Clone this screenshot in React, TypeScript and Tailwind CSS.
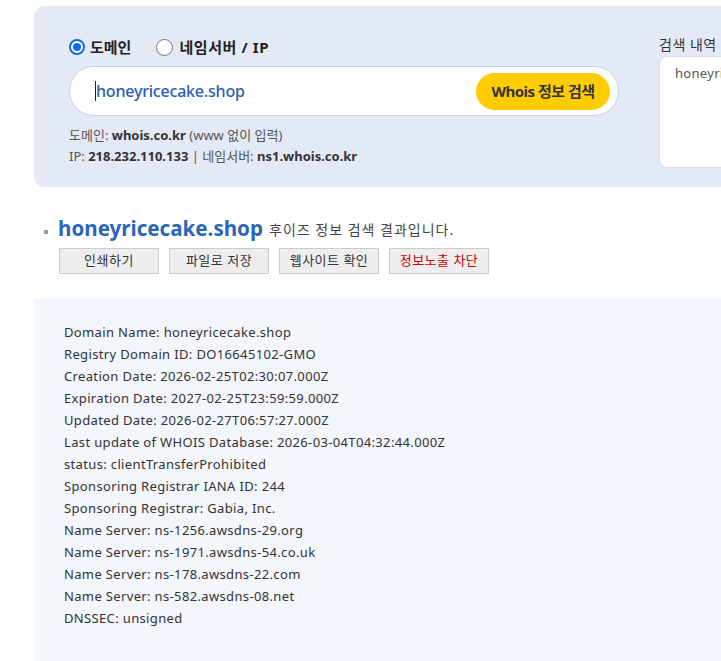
const lines = [
  'Domain Name: honeyricecake.shop',
  'Registry Domain ID: DO16645102-GMO',
  'Creation Date: 2026-02-25T02:30:07.000Z',
  'Expiration Date: 2027-02-25T23:59:59.000Z',
  'Updated Date: 2026-02-27T06:57:27.000Z',
  'Last update of WHOIS Database: 2026-03-04T04:32:44.000Z',
  'status: clientTransferProhibited',
  'Sponsoring Registrar IANA ID: 244',
  'Sponsoring Registrar: Gabia, Inc.',
  'Name Server: ns-1256.awsdns-29.org',
  'Name Server: ns-1971.awsdns-54.co.uk',
  'Name Server: ns-178.awsdns-22.com',
  'Name Server: ns-582.awsdns-08.net',
  'DNSSEC: unsigned',
];

const App = () => {
  return (
    <div
      className="w-[721px] h-[661px] overflow-hidden bg-white"
      style={{ fontFamily: '"Noto Sans", "Noto Sans CJK KR", sans-serif' }}
    >
      <div className="w-[1000px] pl-[34px] pt-[6px]">
        {/* search panel */}
        <div className="flex h-[181px] rounded-[10px] bg-[#e3eaf5] pl-[35px]">
          <div className="w-[550px] pt-[30px]">
            <div className="flex items-center h-[22px] text-[15px] font-bold text-[#222]">
              <span className="flex items-center">
                <span className="w-[16px] h-[16px] rounded-full border-2 border-[#0b6cf0] bg-white flex items-center justify-center">
                  <span className="w-[8px] h-[8px] rounded-full bg-[#0b6cf0]" />
                </span>
                <span className="ml-[5px]">도메인</span>
              </span>
              <span className="flex items-center ml-[25px]">
                <span className="w-[17px] h-[17px] rounded-full border border-[#767676] bg-white" />
                <span className="ml-[6px] tracking-[0.6px]">네임서버 / IP</span>
              </span>
            </div>
            <div className="mt-[8px] h-[50px] rounded-full border border-[#c3d3ef] bg-white flex items-center justify-between pl-[25px] pr-[8px]">
              <div className="flex items-center text-[16px] font-medium text-[#2a5cb8] tracking-[-0.2px]">
                <span className="w-[1px] h-[20px] bg-[#222]" />
                <span>honeyricecake.shop</span>
              </div>
              <button className="h-[37px] w-[134px] rounded-full bg-[#ffcc00] text-[15px] font-bold text-[#333] tracking-[-0.5px]">
                Whois 정보 검색
              </button>
            </div>
            <div className="mt-[9px] text-[13px] leading-[21px] text-[#555]">
              <div>
                도메인: <b className="text-[#333]">whois.co.kr</b> (www 없이 입력)
              </div>
              <div>
                IP: <b className="text-[#333]">218.232.110.133</b> | 네임서버: <b className="text-[#333]">ns1.whois.co.kr</b>
              </div>
            </div>
          </div>
          <div className="ml-[40px] pt-[29px]">
            <div className="text-[14px] leading-[20px] text-[#333] tracking-[0.5px]">검색 내역</div>
            <div className="mt-[1px] w-[200px] h-[112px] rounded-[8px] border border-[#d5deec] bg-white px-[15px] pt-[7px] text-[13px] text-[#555] tracking-[0.3px]">
              honeyricecake.shop
            </div>
          </div>
        </div>

        {/* result title */}
        <div className="mt-[27px] pl-[10px] flex items-end">
          <span className="w-[4px] h-[4px] bg-[#999] mb-[8px] mr-[10px]" />
          <span className="text-[20.6px] font-bold leading-[28px] text-[#2a66b9]">honeyricecake.shop</span>
          <span className="ml-[6px] mb-[2px] text-[14px] text-[#444] tracking-[1px]">후이즈 정보 검색 결과입니다.</span>
        </div>
        <div className="mt-[6px] pl-[25px] flex gap-[10px]">
          {['인쇄하기', '파일로 저장', '웹사이트 확인', '정보노출 차단'].map((t, i) => (
            <button
              key={t}
              className={
                'w-[100px] h-[26px] border border-[#cccccc] bg-[#eeeeee] text-[13px] tracking-[0.5px] ' +
                (i === 3 ? 'text-[#cc0000]' : 'text-[#333]')
              }
            >
              {t}
            </button>
          ))}
        </div>

        {/* whois raw data */}
        <div className="mt-[25px] h-[400px] bg-[#f3f6fb] pl-[30px] pt-[22px] text-[13px] leading-[22px] text-[#333] tracking-[0.35px]">
          {lines.map((l) => (
            <div key={l}>{l}</div>
          ))}
        </div>
      </div>
    </div>
  );
};

export default App;
